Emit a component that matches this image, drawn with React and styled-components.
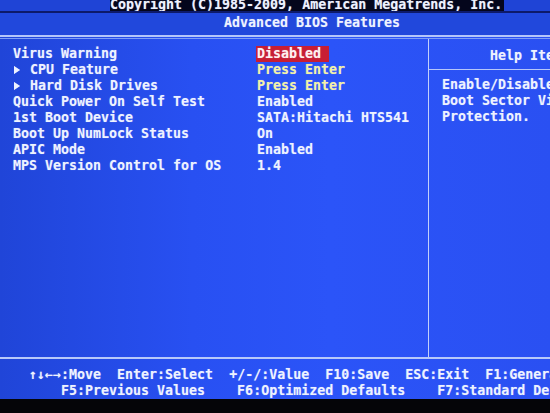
import React from "react";
import styled, { createGlobalStyle } from "styled-components";

const Global = createGlobalStyle`
  html, body { margin: 0; padding: 0; background: #000; }
  body { width: 550px; height: 413px; overflow: hidden; }
`;

const Screen = styled.div`
  width: 550px;
  height: 413px;
  overflow: hidden;
  display: flex;
  flex-direction: column;
  background: #050508;
  font-family: "DejaVu Sans Mono", "Liberation Mono", monospace;
  font-weight: bold;
  font-size: 13.3px;
  line-height: 16px;
  color: #eef2ff;
  text-shadow: 0 0 1px rgba(230, 240, 255, 0.45);
  white-space: pre;
`;

const Panel = styled.div`
  display: flex;
  flex-direction: column;
  background: linear-gradient(90deg, #2045d8 0%, #2850f2 35%, #2b54f8 60%, #2a50f2 100%);
`;

const TopBar = styled.div`
  height: 11px;
  padding-left: 110px;
  display: flex;
  align-items: flex-end;
  border-bottom: 2px solid #0d1a6a;
  background: #1f44d6;
`;

const Copyright = styled.span`
  display: block;
  background: #04061c;
  line-height: 16px;
  height: 11px;
  overflow: hidden;
  padding-right: 2px;
  & > span { position: relative; top: -3px; }
`;

const TitleBar = styled.div`
  height: 20px;
  padding-left: 224px;
  padding-top: 2px;
  line-height: 16px;
  background: #2148dc;
  border-bottom: 2px solid #b4c6fa;
`;

const ThinRule = styled.div`
  height: 1px;
  margin-top: 1px;
  background: #7f9df6;
`;

const Body = styled.div`
  height: 318px;
  display: flex;
  border-bottom: 2px solid #b8c9fa;
`;

const MainCol = styled.div`
  width: 429px;
  border-right: 1px solid #c2d0fb;
  padding: 7px 0 0 13px;
  box-sizing: border-box;
  display: flex;
  flex-direction: column;
`;

const Row = styled.div`
  display: grid;
  grid-template-columns: 244px 1fr;
  height: 16px;
`;

const Label = styled.span`
  display: flex;
  align-items: center;
`;

const Tri = styled.span`
  display: inline-block;
  width: 0;
  height: 0;
  border-left: 6px solid #eef2ff;
  border-top: 4px solid transparent;
  border-bottom: 4px solid transparent;
  margin: 0 10px 0 1px;
  filter: drop-shadow(0 0 0.5px rgba(230, 240, 255, 0.6));
`;

const Value = styled.span`
  justify-self: start;
  color: ${(p) => (p.$tone === "yellow" ? "#f3f1a6" : p.$tone === "sel" ? "#fff0f0" : "#eef2ff")};
  background: ${(p) => (p.$tone === "sel" ? "#c81e34" : "transparent")};
  padding-right: ${(p) => (p.$tone === "sel" ? "8px" : "0")};
  margin-left: ${(p) => (p.$tone === "sel" ? "-1px" : "0")};
  padding-left: ${(p) => (p.$tone === "sel" ? "1px" : "0")};
`;

const HelpCol = styled.div`
  flex: 1;
  display: flex;
  flex-direction: column;
  overflow: hidden;
`;

const HelpHead = styled.div`
  height: 31px;
  padding: 9px 0 0 61px;
  box-sizing: border-box;
  border-bottom: 1px solid #b6c7fa;
`;

const HelpText = styled.div`
  padding: 7px 0 0 13px;
  display: flex;
  flex-direction: column;
`;

const Footer = styled.div`
  height: 40px;
  padding-top: 8px;
  box-sizing: border-box;
  display: flex;
  flex-direction: column;
`;

const FootLine = styled.div`
  padding-left: ${(p) => p.$indent}px;
  height: 16px;
`;

const items = [
  ["Virus Warning", "Disabled", "sel", false],
  ["CPU Feature", "Press Enter", "yellow", true],
  ["Hard Disk Drives", "Press Enter", "yellow", true],
  ["Quick Power On Self Test", "Enabled", "white", false],
  ["1st Boot Device", "SATA:Hitachi HTS541", "white", false],
  ["Boot Up NumLock Status", "On", "white", false],
  ["APIC Mode", "Enabled", "white", false],
  ["MPS Version Control for OS", "1.4", "white", false],
];

export default function App() {
  return (
    <>
      <Global />
      <Screen>
        <Panel>
          <TopBar>
            <Copyright>
              <span>Copyright (C)1985-2009, American Megatrends, Inc.</span>
            </Copyright>
          </TopBar>
          <TitleBar>Advanced BIOS Features</TitleBar>
          <ThinRule />
          <Body>
            <MainCol>
              {items.map(([label, value, tone, sub]) => (
                <Row key={label}>
                  <Label>
                    {sub && <Tri />}
                    {label}
                  </Label>
                  <Value $tone={tone}>{value}</Value>
                </Row>
              ))}
            </MainCol>
            <HelpCol>
              <HelpHead>Help Item</HelpHead>
              <HelpText>
                <div>Enable/Disable the</div>
                <div>Boot Sector Virus</div>
                <div>Protection.</div>
              </HelpText>
            </HelpCol>
          </Body>
          <Footer>
            <FootLine $indent={29}>↑↓←→:Move  Enter:Select  +/-/:Value  F10:Save  ESC:Exit  F1:General Help</FootLine>
            <FootLine $indent={61}>F5:Previous Values    F6:Optimized Defaults    F7:Standard Defaults</FootLine>
          </Footer>
        </Panel>
      </Screen>
    </>
  );
}
